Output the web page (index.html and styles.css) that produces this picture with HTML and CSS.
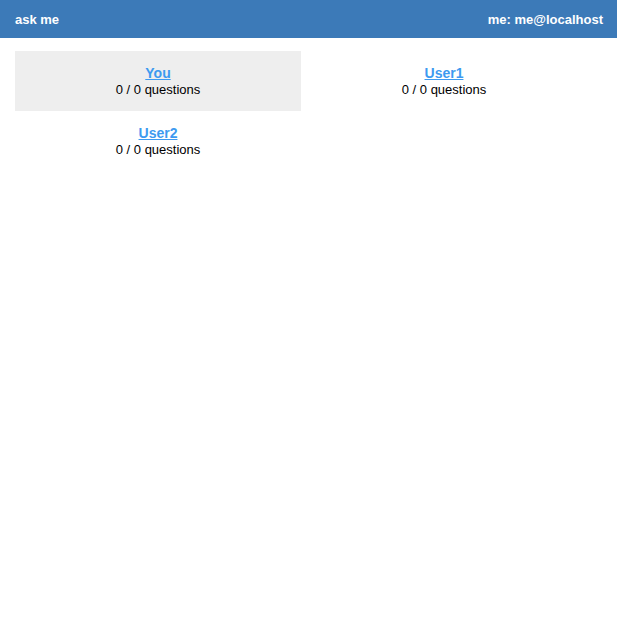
FILE: index.html
```html
<!DOCTYPE html>
<html lang="en">
<head>
    <meta charset="UTF-8">
    <meta name="viewport" content="width=device-width, initial-scale=1.0">
    <link rel="stylesheet" href="styles.css">
    <title>ask me</title>
</head>
<body>
    <div class="topbar">
        <span class="brand">ask me</span>
        <span class="me">me: me@localhost</span>
    </div>
    <div class="users">
        <div class="user-cell current">
            <a href="#" class="user-name">You</a>
            <div class="user-count">0 / 0 questions</div>
        </div>
        <div class="user-cell">
            <a href="#" class="user-name">User1</a>
            <div class="user-count">0 / 0 questions</div>
        </div>
        <div class="user-cell">
            <a href="#" class="user-name">User2</a>
            <div class="user-count">0 / 0 questions</div>
        </div>
    </div>
</body>
</html>
```

FILE: styles.css
```css
body {
    margin: 0;
    font-family: "Liberation Sans", Arial, sans-serif;
    font-size: 13px;
    color: #000;
    background: #fff;
}

.topbar {
    display: flex;
    justify-content: space-between;
    align-items: center;
    height: 38px;
    padding: 0 14px 0 15px;
    background-color: #3c7ab8;
    color: #fff;
    font-weight: bold;
    font-size: 13px;
}

/* user list */
.users {
    display: grid;
    grid-template-columns: 286px 286px;
    margin: 13px 0 0 15px;
}

.user-cell {
    display: flex;
    flex-direction: column;
    align-items: center;
    height: 60px;
    padding-top: 14px;
    box-sizing: border-box;
}

.user-cell.current {
    background-color: #eeeeee;
}

.user-name {
    color: #3d9af0;
    font-weight: bold;
    font-size: 14px;
    line-height: 16px;
}

.user-count {
    margin-top: 1px;
    line-height: 16px;
}
```
